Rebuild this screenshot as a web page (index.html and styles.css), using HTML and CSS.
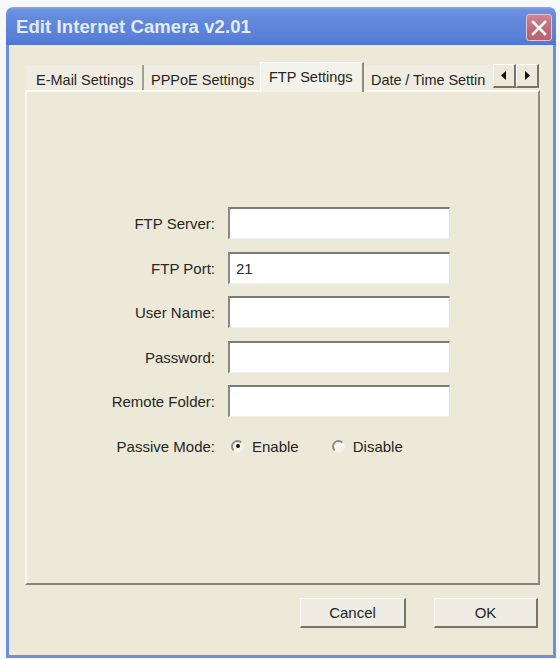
FILE: index.html
```html
<!DOCTYPE html>
<html>
<head>
<meta charset="utf-8">
<title>Edit Internet Camera v2.01</title>
<link rel="stylesheet" href="styles.css">
</head>
<body>
<div class="window">
  <div class="titlebar">
    <span class="title">Edit Internet Camera v2.01</span>
    <span class="close" aria-label="Close">
      <svg width="16" height="16" viewBox="0 0 16 16"><path d="M2 2 L14 14 M14 2 L2 14" stroke="#fff" stroke-width="2.6" stroke-linecap="square"/></svg>
    </span>
  </div>
  <div class="client">
    <div class="tabs">
      <div class="tab tab-mail">E-Mail Settings</div>
      <div class="tab tab-pppoe">PPPoE Settings</div>
      <div class="tab tab-ftp active">FTP Settings</div>
      <div class="tab tab-date">Date / Time Settin</div>
      <div class="scroll">
        <span class="sbtn"><svg width="6" height="9" viewBox="0 0 6 9"><path d="M5 0 L0 4.5 L5 9 Z" fill="#111"/></svg></span>
        <span class="sbtn"><svg width="6" height="9" viewBox="0 0 6 9"><path d="M1 0 L6 4.5 L1 9 Z" fill="#111"/></svg></span>
      </div>
    </div>
    <div class="panel">
      <div class="form">
        <label class="lbl">FTP Server:</label>
        <div class="field"></div>
        <label class="lbl">FTP Port:</label>
        <div class="field">21</div>
        <label class="lbl">User Name:</label>
        <div class="field"></div>
        <label class="lbl">Password:</label>
        <div class="field"></div>
        <label class="lbl">Remote Folder:</label>
        <div class="field"></div>
        <label class="lbl passive">Passive Mode:</label>
        <div class="radios">
          <span class="radio"><span class="dot checked"></span>Enable</span>
          <span class="radio"><span class="dot"></span>Disable</span>
        </div>
      </div>
    </div>
    <div class="actions">
      <span class="btn btn-cancel">Cancel</span>
      <span class="btn btn-ok">OK</span>
    </div>
  </div>
</div>
</body>
</html>
```
FILE: styles.css
```css
html, body {
  margin: 0;
  padding: 0;
  background: #f7f8fa;
}
body {
  font-family: "Liberation Sans", Arial, sans-serif;
  color: #262626;
}
.window {
  margin: 7px 0 0 6px;
  width: 550px;
  height: 651px;
  display: flex;
  flex-direction: column;
}
.titlebar {
  height: 38px;
  box-sizing: border-box;
  border-radius: 7px 7px 0 0;
  background: linear-gradient(#8aa8ea 0px, #6e92e0 3px, #6289dc 12px, #5a81d9 30px, #4e76d3 38px);
  display: flex;
  align-items: center;
  justify-content: space-between;
  padding: 2px 4px 0 10px;
}
.title {
  font-weight: bold;
  font-size: 18.5px;
  color: #e4ebf8;
  letter-spacing: 0.1px;
}
.close {
  width: 26px;
  height: 27px;
  box-sizing: border-box;
  margin-top: 1px;
  border: 1px solid #e2c4cc;
  border-radius: 3px;
  background: linear-gradient(#d08591, #c06878 60%, #b86272);
  display: flex;
  align-items: center;
  justify-content: center;
}
.client {
  flex: 1;
  background: #ece9d9;
  border: 3px solid #6d8fdf;
  border-top: none;
  padding: 17px 13px 27px 16px;
  display: flex;
  flex-direction: column;
}
.tabs {
  display: flex;
  align-items: flex-end;
  height: 28px;
  margin-left: 2px;
  position: relative;
  z-index: 1;
  font-size: 14.5px;
}
.tab {
  height: 25px;
  box-sizing: border-box;
  display: flex;
  align-items: center;
  white-space: nowrap;
  overflow: hidden;
  background: #efede2;
  padding-top: 4px;
}
.tab-mail {
  width: 117px;
  padding-left: 9px;
  border-right: 2px solid #a19f92;
}
.tab-pppoe {
  width: 116px;
  padding-left: 7px;
}
.tab-ftp.active {
  width: 104px;
  height: 30px;
  margin-bottom: -2px;
  padding-left: 8px;
  padding-top: 1px;
  padding-bottom: 2px;
  background: #f3f2ea;
  border-top: 1px solid #ffffff;
  border-left: 1px solid #ffffff;
  border-right: 2px solid #8e8c7f;
}
.tab-date {
  width: 129px;
  padding-left: 7px;
  letter-spacing: -0.06px;
}
.scroll {
  display: flex;
  height: 24px;
  margin-bottom: 2px;
}
.sbtn {
  width: 23px;
  height: 24px;
  box-sizing: border-box;
  background: #ece9d9;
  border-top: 1px solid #ffffff;
  border-left: 1px solid #ffffff;
  border-right: 2px solid #77766a;
  border-bottom: 2px solid #77766a;
  display: flex;
  align-items: center;
  justify-content: center;
}
.panel {
  height: 495px;
  box-sizing: border-box;
  background: #ece9d9;
  border-top: 2px solid #fbfaf5;
  border-left: 2px solid #f7f6ef;
  border-right: 2px solid #8d8c7e;
  border-bottom: 2px solid #85847a;
  padding-top: 115px;
}
.form {
  display: grid;
  grid-template-columns: 188px 222px;
  column-gap: 13px;
  row-gap: 12.5px;
  grid-auto-rows: 32px;
  font-size: 15px;
}
.lbl {
  display: flex;
  align-items: center;
  justify-content: flex-end;
  padding-top: 1px;
}
.lbl.passive {
  margin-top: 1px;
}
.field {
  background: #ffffff;
  box-sizing: border-box;
  border-top: 2px solid #7c7c76;
  border-left: 2px solid #8a8a83;
  border-right: 1px solid #e4e2d6;
  border-bottom: 1px solid #f2f1e9;
  padding-left: 6px;
  display: flex;
  align-items: center;
}
.radios {
  margin-top: 1px;
  display: flex;
  align-items: center;
  padding-left: 3px;
}
.radio {
  display: flex;
  align-items: center;
}
.radio + .radio {
  margin-left: 33px;
}
.dot {
  width: 13px;
  height: 13px;
  box-sizing: border-box;
  border-radius: 50%;
  border: 2px solid #f2f1ec;
  border-top-color: #8a8a85;
  border-left-color: #8a8a85;
  background: #f4f3ee;
  margin-right: 8px;
  display: flex;
  align-items: center;
  justify-content: center;
}
.dot.checked::after {
  content: "";
  width: 4px;
  height: 4px;
  border-radius: 50%;
  background: #111;
}
.actions {
  display: flex;
  justify-content: flex-end;
  margin-top: 13px;
  padding-right: 2px;
  gap: 28px;
}
.btn {
  height: 30px;
  box-sizing: border-box;
  display: flex;
  align-items: center;
  justify-content: center;
  font-size: 15px;
  background: #efede3;
  border-top: 1px solid #fbfaf6;
  border-left: 1px solid #fbfaf6;
  border-right: 2px solid #76756a;
  border-bottom: 2px solid #76756a;
}
.btn-cancel {
  width: 106px;
}
.btn-ok {
  width: 104px;
}
```
